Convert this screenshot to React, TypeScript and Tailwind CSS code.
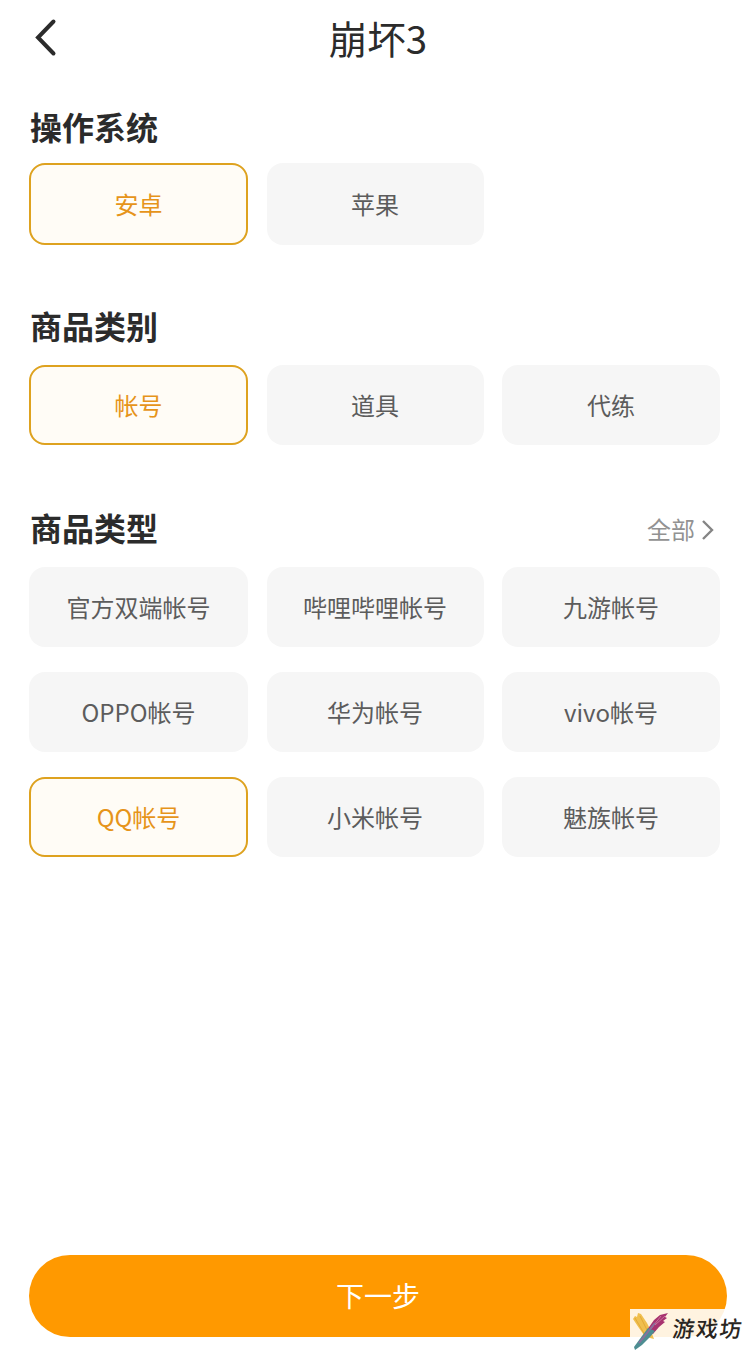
import clsx from "clsx";

type Option = {
  label: string;
  selected?: boolean;
};

const systems: Option[] = [{ label: "安卓", selected: true }, { label: "苹果" }];

const categories: Option[] = [
  { label: "帐号", selected: true },
  { label: "道具" },
  { label: "代练" },
];

const productTypes: Option[] = [
  { label: "官方双端帐号" },
  { label: "哔哩哔哩帐号" },
  { label: "九游帐号" },
  { label: "OPPO帐号" },
  { label: "华为帐号" },
  { label: "vivo帐号" },
  { label: "QQ帐号", selected: true },
  { label: "小米帐号" },
  { label: "魅族帐号" },
];

function SectionTitle({ children }: { children: string }) {
  return (
    <h2 className="-ml-px pb-[3px] text-[32px] leading-[45px] font-bold text-[#2b2b2b]">
      {children}
    </h2>
  );
}

function OptionGrid({ options, tall }: { options: Option[]; tall?: boolean }) {
  return (
    <div className="-ml-0.5 grid grid-cols-[219px_217px_218px] gap-x-[18.5px] gap-y-[25px]">
      {options.map((option) => (
        <button
          key={option.label}
          className={clsx(
            "rounded-2xl text-2xl",
            tall ? "h-[82px]" : "h-20",
            option.selected
              ? "border-2 border-[#dea21f] bg-[#fffcf6] text-[#e6941a]"
              : "bg-[#f6f6f6] text-[#5c5c5c]"
          )}
        >
          {option.label}
        </button>
      ))}
    </div>
  );
}

function Watermark() {
  return (
    <div className="absolute right-0 bottom-0 flex h-11 w-[126px] items-start bg-white/88">
      <svg width="40" height="44" viewBox="0 0 40 44" fill="none">
        <path d="M3 10l2-3 2 1 1-4 3 1 6 9 4 8 3 8-4-1-6-3-5-7z" fill="#f0bf4e" />
        <path d="M5 9l10 17M10 7l9 18" stroke="#e3a936" />
        <path
          d="M38 4l-8 2-6 5-7 10 6 4 6-7 6-5-2-1 4-3-2-1z"
          fill="#a8326f"
        />
        <path d="M35 7l-10 9M31 7l-11 14" stroke="#c9749a" />
        <path d="M18 19l-6 8-8 11 1 3 7-5 8-8 5-6z" fill="#4d8d92" />
        <path d="M25 14L9 34" stroke="#8a6f9c" strokeWidth="2" />
      </svg>
      <span className="ml-[3px] -skew-x-6 pt-0.5 text-[22px] leading-8 font-medium tracking-[1.5px] whitespace-nowrap text-[#292521]">
        游戏坊
      </span>
    </div>
  );
}

export default function App() {
  return (
    <div className="relative flex h-[1353px] w-[756px] flex-col overflow-hidden bg-white font-['Noto_Sans_CJK_SC',sans-serif]">
      <header className="grid h-20 grid-cols-3 items-center">
        <button aria-label="返回" className="ml-[34px] w-fit">
          <svg
            width="24"
            height="40"
            viewBox="0 0 24 40"
            fill="none"
            stroke="#2b2b2b"
            strokeWidth="4"
            className="-mt-1.5"
          >
            <path d="M19.5 4.5L4 20.5l15.5 16" strokeLinecap="round" />
          </svg>
        </button>
        <h1 className="pb-[5px] text-center text-[38.5px] leading-none text-[#2b2b2b]">
          崩坏3
        </h1>
      </header>

      <main className="flex-1 px-[31px]">
        <section className="mt-6">
          <SectionTitle>操作系统</SectionTitle>
          <div className="mt-[11px]">
            <OptionGrid options={systems} tall />
          </div>
        </section>

        <section className="mt-[58px]">
          <SectionTitle>商品类别</SectionTitle>
          <div className="mt-[14px]">
            <OptionGrid options={categories} />
          </div>
        </section>

        <section className="mt-[60px]">
          <div className="flex items-center justify-between pr-[10px]">
            <SectionTitle>商品类型</SectionTitle>
            <button className="flex items-center gap-1.5 text-2xl text-[#929292]">
              全部
              <svg
                width="14"
                height="20"
                viewBox="0 0 14 20"
                fill="none"
                stroke="#858585"
                strokeWidth="2.4"
                className="mt-0.5"
              >
                <path d="M2 1l9 9-9 9" />
              </svg>
            </button>
          </div>
          <div className="mt-[14px]">
            <OptionGrid options={productTypes} />
          </div>
        </section>
      </main>

      <footer className="px-[29px] pb-4">
        <button className="h-[82px] w-full rounded-full bg-[#ff9900] pb-0.5 text-[28px] text-white">
          下一步
        </button>
      </footer>

      <Watermark />
    </div>
  );
}
